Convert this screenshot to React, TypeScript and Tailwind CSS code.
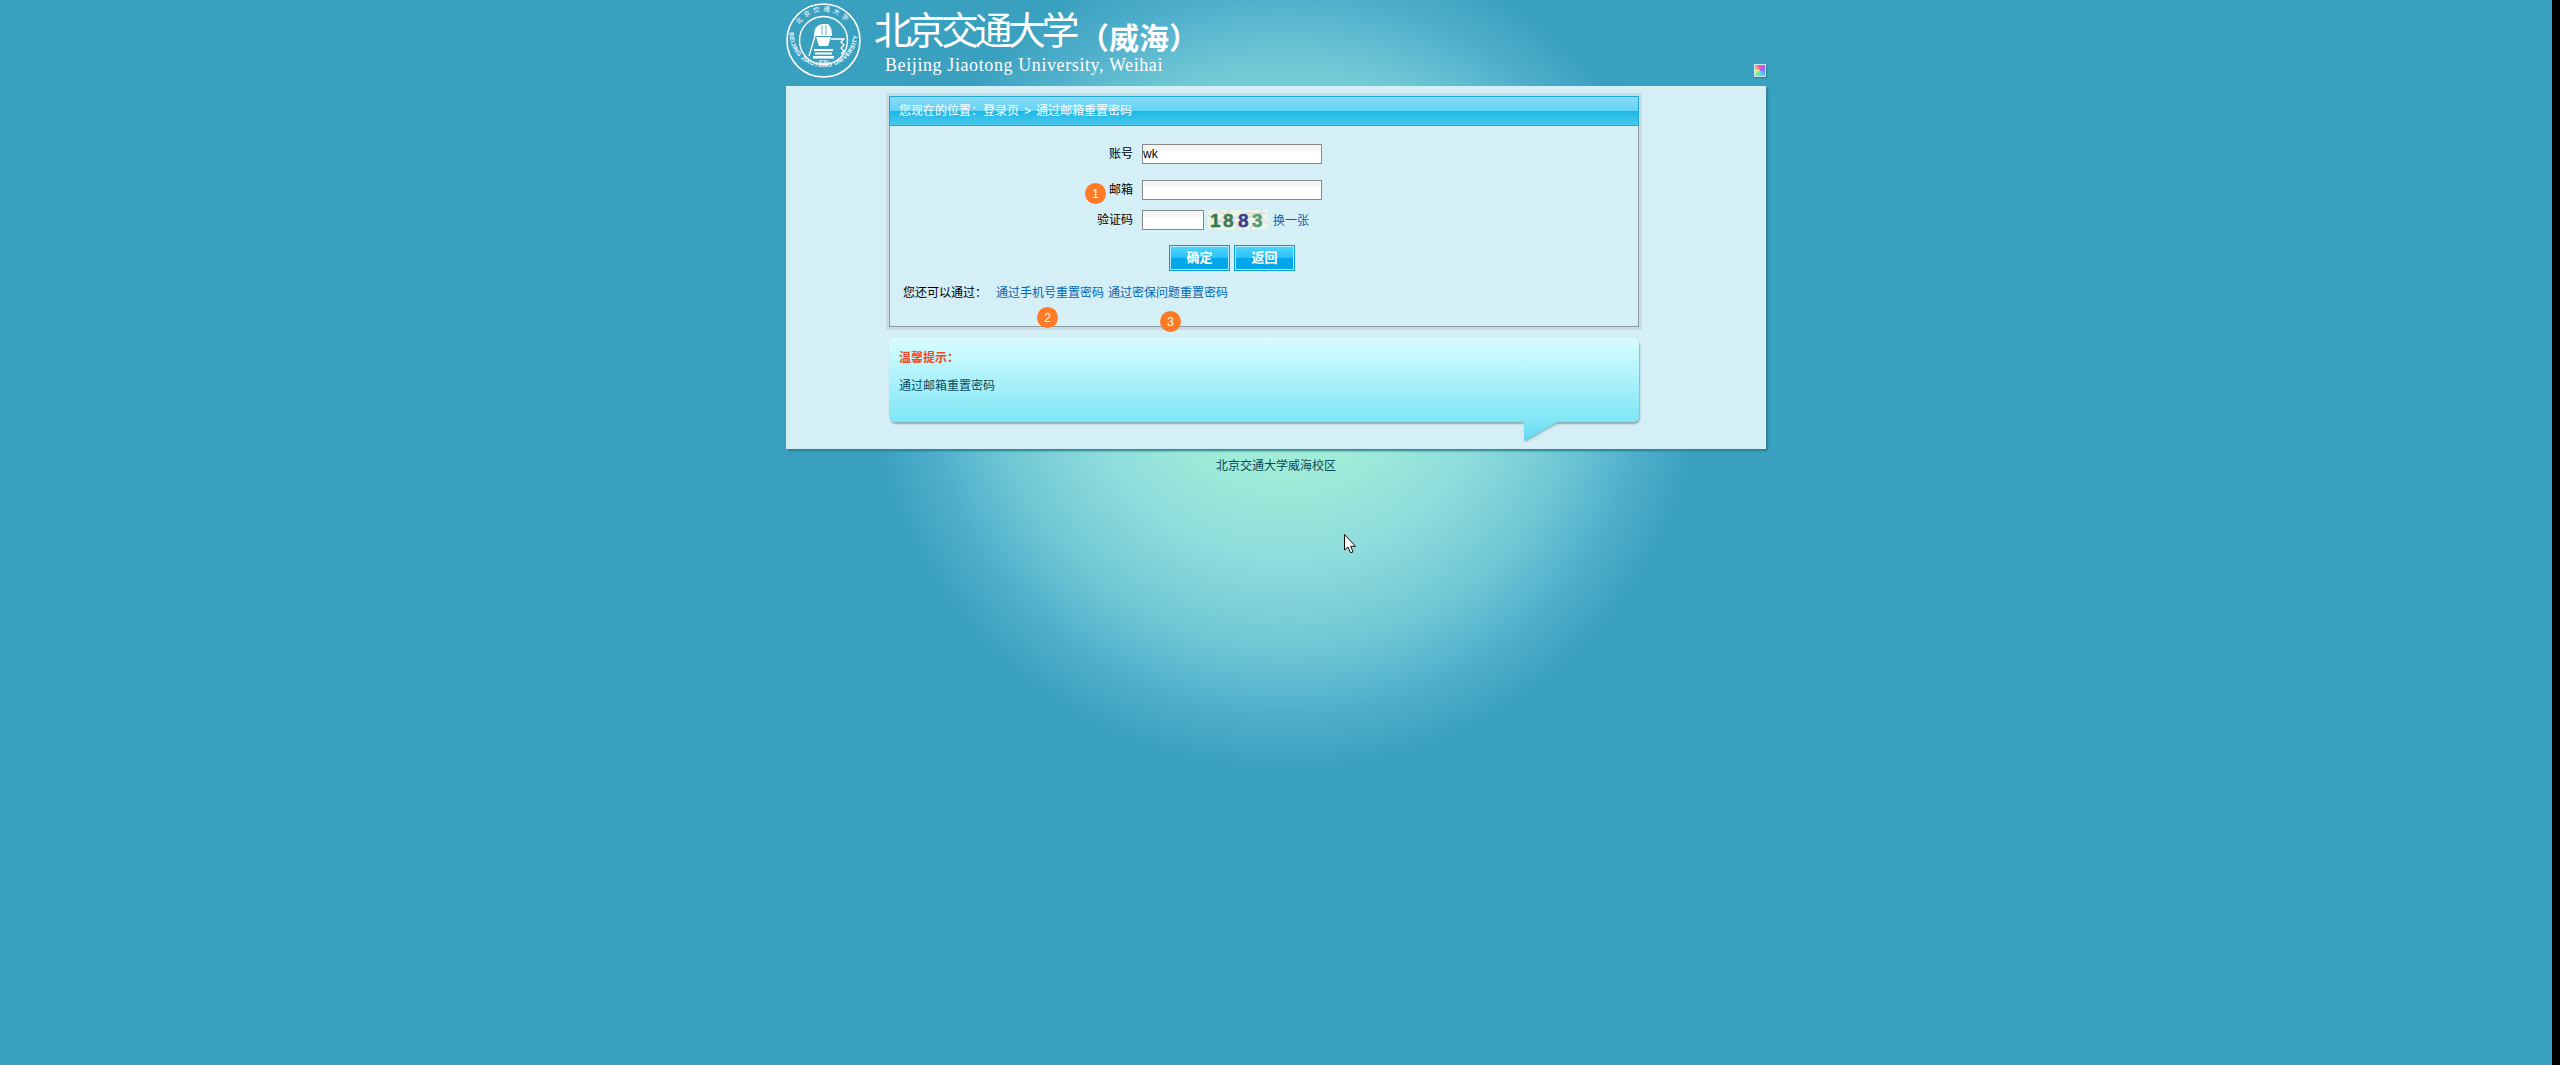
import React from 'react'

const cjk = "font-['Liberation_Sans','Noto_Sans_CJK_SC',sans-serif]"

function Seal() {
  return (
    <svg width="75" height="75" viewBox="0 0 75 75" className="mt-[3px] shrink-0">
      <defs>
        <path id="sealTop" d="M 8.5 37.5 A 29 29 0 0 1 66.5 37.5" />
        <path id="sealBottom" d="M 4.5 22 A 34 34 0 1 0 70.5 22" />
      </defs>
      <circle cx="37.5" cy="37.5" r="36.5" fill="none" stroke="#fff" strokeWidth="1.6" />
      <circle cx="37.5" cy="37.5" r="24" fill="none" stroke="#fff" strokeWidth="1.4" />
      <text fill="#fff" fontSize="6.5" fontFamily="Noto Sans CJK SC, sans-serif" letterSpacing="3">
        <textPath href="#sealTop" startOffset="18%">北京交通大学</textPath>
      </text>
      <text fill="#fff" fontSize="6" fontWeight="700" fontFamily="Liberation Sans, sans-serif" letterSpacing="0.4">
        <textPath href="#sealBottom" startOffset="6%">BEIJING JIAOTONG UNIVERSITY</textPath>
      </text>
      <path d="M28 33 Q28 22 36 21 L42 21 Q46 24 46 33 Z" fill="#fff" />
      <path d="M36 22 V32 M40 22 V32" stroke="#3aa0bf" strokeWidth="0.8" />
      <path d="M30 34 H45 L42 43 H33 Z" fill="#fff" />
      <path d="M28 46 H47 V48 H28 Z M29 49.5 H46 V51.5 H29 Z M27 53 H48 V55.5 H27 Z" fill="#fff" />
      <path d="M29 33 L23 53 M45 36 H58 L55 39 L58 42 L55 45 L58 48 L55 51" fill="none" stroke="#fff" strokeWidth="1.3" />
      <text x="37.5" y="60.5" textAnchor="middle" fill="#fff" fontSize="4.5" fontWeight="700" fontFamily="Liberation Sans, sans-serif">BJH</text>
    </svg>
  )
}

function Captcha() {
  return (
    <svg width="60" height="20" viewBox="0 0 60 20" className="ml-1 shrink-0">
      <rect width="60" height="20" fill="#eaf5e8" />
      <path d="M0 5 Q15 18 30 7 T60 14 M4 20 L22 0 M28 20 Q40 2 58 3 M42 20 L54 0 M10 0 L36 20" fill="none" stroke="#d9bfd8" strokeWidth="0.8" />
      <g fontFamily="Liberation Sans, sans-serif" fontWeight="700" fontSize="19">
        <text x="2" y="17" fill="#2f7d4f" stroke="#2f7d4f" strokeWidth="0.5">1</text>
        <text x="15" y="17" fill="#3f7a58" stroke="#3f7a58" strokeWidth="0.5">8</text>
        <text x="30" y="17" fill="#3c3f8f" stroke="#3c3f8f" strokeWidth="0.5">8</text>
        <text x="44" y="17" fill="#5c9a70" stroke="#5c9a70" strokeWidth="0.5">3</text>
      </g>
    </svg>
  )
}

function Field({ label, value, width = 'w-[180px]' }: { label: string; value?: string; width?: string }) {
  return (
    <div className="flex h-5 items-center">
      <label className="w-[243px] text-right text-xs text-black">{label}</label>
      <div className={`ml-[9px] flex h-5 ${width} items-center border border-[#888] bg-[linear-gradient(#f4f5f5_0,#f4f5f5_6px,#fff_6px)] text-xs leading-none text-black`}>
        {value}
      </div>
    </div>
  )
}

function Badge({ n, className }: { n: number; className: string }) {
  return (
    <span className={`absolute z-10 flex h-[21px] w-[21px] items-center justify-center rounded-full bg-[#ff7a26] text-xs text-white ${className}`}>
      {n}
    </span>
  )
}

function Btn({ children }: { children: React.ReactNode }) {
  return (
    <div className="flex h-[26px] w-[61px] items-center justify-center border border-[#0a9ad6] bg-[linear-gradient(#4fd6fc_0,#2cc2f6_48%,#02a9ec_48%,#02a6e8_100%)] text-[13px] font-bold text-white shadow-[inset_0_0_0_1px_#b5ecfb]">
      {children}
    </div>
  )
}

export default function App() {
  return (
    <div className={`flex h-[1065px] w-full overflow-hidden bg-black ${cjk}`}>
      <div className="relative h-full w-[2552px] shrink-0 bg-[#3aa0bf] bg-[radial-gradient(420px_415px_at_1286px_355px,#a0ecd8_0%,#a0ecd8_28%,#8edcdc_50%,#70c8d4_70%,#50b0cc_86%,#3aa0bf_100%)]">
        <div className="mx-auto w-[980px]">
          {/* top logo strip */}
          <div className="flex h-[86px] items-start text-white">
            <Seal />
            <div className="ml-[13px] flex flex-col">
              <div className="flex h-[55px] items-center font-['Noto_Sans_CJK_SC',sans-serif]">
                <span className="text-[38px] leading-none tracking-[-4.5px]">北京交通大学</span>
                <span className="mt-4 ml-1 text-[30px] leading-none font-bold">（威海）</span>
              </div>
              <div className="mt-[1px] ml-[11px] font-['Liberation_Serif',serif] text-[18px] leading-[18px] tracking-[0.6px]">
                Beijing Jiaotong University, Weihai
              </div>
            </div>
            <span className="mt-[64px] ml-auto h-[13px] w-[12px] border border-[#cfe6ee] bg-[conic-gradient(from_200deg,#5cf0c0,#e8f060,#ff5aa0,#9a60ff,#60b0ff,#5cf0c0)] shadow-[1px_1px_1px_#2a7f93]" />
          </div>

          <div className="h-[363px] bg-[#d5eff6] pt-[7px] pl-[100px] shadow-[2px_2px_2px_#2a7f93]">
            <div className="w-[756px] border-[3px] border-[#c8dde6]">
              <div className="flex h-[30px] items-center border border-[#1aa7d8] bg-[linear-gradient(#8adcf8_0,#62d3f5_49%,#1ab8e6_50%,#4cc8ec_100%)] pl-[9px] text-xs text-white">
                <span>您现在的位置：登录页</span>
                <span className="mx-[5px]">&gt;</span>
                <span>通过邮箱重置密码</span>
              </div>
              <div className="relative h-[201px] border-x border-b border-[#8c9aa3] pt-[18px]">
                <Field label="账号" value="wk" />
                <div className="mt-4">
                  <Field label="邮箱" />
                </div>
                <div className="mt-[10px] flex items-center">
                  <Field label="验证码" width="w-[62px]" />
                  <Captcha />
                  <a className="mt-[2px] ml-[5px] text-xs text-[#0066b3]">换一张</a>
                </div>
                <div className="mt-[15px] ml-[279px] flex gap-1">
                  <Btn>确定</Btn>
                  <Btn>返回</Btn>
                </div>
                <div className="mt-[14px] flex h-4 items-center pl-[13px] text-xs text-black">
                  <span className="w-[93px]">您还可以通过：</span>
                  <a className="text-[#0066b3]">通过手机号重置密码</a>
                  <a className="ml-1 text-[#0066b3]">通过密保问题重置密码</a>
                </div>
                <Badge n={1} className="top-[57px] left-[195px]" />
                <Badge n={2} className="top-[181px] left-[147px]" />
                <Badge n={3} className="top-[185px] left-[270px]" />
              </div>
            </div>

            <div className="relative mt-2 ml-[3px] h-[84px] w-[750px] rounded-md bg-[linear-gradient(#d8fdff,#7fe6f6)] pt-3 pl-[10px] shadow-[1px_2px_2px_#8aabb5]">
              <div className="text-xs leading-4 font-bold text-[#f04a28]">温馨提示：</div>
              <div className="mt-3 text-xs leading-4 text-[#0b4a5a]">通过邮箱重置密码</div>
              {/* speech bubble tail */}
              <div className="absolute top-[84px] left-[635px] drop-shadow-[1px_1px_1px_#8aabb5]">
                <div className="h-[19px] w-[33px] bg-[linear-gradient(#7fe6f6,#62d8f3)] [clip-path:polygon(0_0,100%_0,0_100%)]" />
              </div>
            </div>
          </div>

          <div className="pt-[9px] text-center text-xs leading-4 text-[#0a4a5a]">北京交通大学威海校区</div>
        </div>

        {/* mouse pointer captured in the shot */}
        <svg width="13" height="20" viewBox="0 0 13 20" className="absolute top-[534px] left-[1344px]">
          <path d="M0.5 0.5 V16 L4 13 L6.5 18.8 L9 17.8 L6.7 12.3 H11.5 Z" fill="#fff" stroke="#111" strokeWidth="1" />
        </svg>
      </div>
      <div className="w-2 shrink-0 bg-black" />
    </div>
  )
}
